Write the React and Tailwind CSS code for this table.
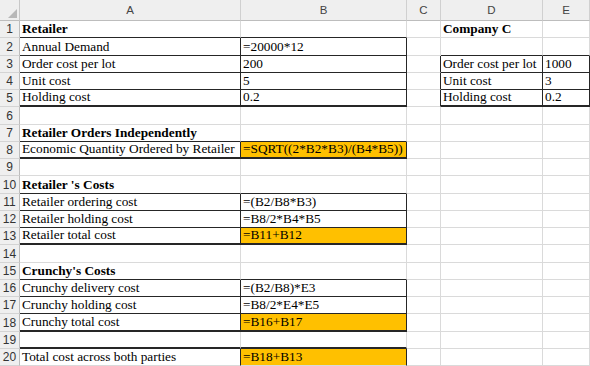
import React from "react";

const BOTTOM = {
  g: "border-b border-b-[#dadada]",
  d: "border-b border-b-[#262626]",
  D: "border-b-2 border-b-[#262626]",
};
const RIGHT = {
  g: "border-r border-r-[#dadada]",
  d: "border-r border-r-[#262626]",
};

// each row: [A, B, C, D, E]; each cell: {t, b (bold), f (fill), bb, br}
const c = (t = "", o = {}) => ({ t, bb: "g", br: "g", ...o });

const rows = [
  [c("Retailer", { b: 1, bb: "d" }), c("", { bb: "d" }), c(), c("Company C", { b: 1 }), c()],
  [c("Annual Demand", { bb: "d", br: "d" }), c("=20000*12", { bb: "d", br: "d" }), c(), c("", { bb: "d" }), c("", { bb: "d" })],
  [c("Order cost per lot", { bb: "d", br: "d" }), c("200", { bb: "d", br: "d" }), c("", { br: "d" }), c("Order cost per lot", { bb: "d", br: "d" }), c("1000", { bb: "d", br: "d" })],
  [c("Unit cost", { bb: "d", br: "d" }), c("5", { bb: "d", br: "d" }), c("", { br: "d" }), c("Unit cost", { bb: "d", br: "d" }), c("3", { bb: "d", br: "d" })],
  [c("Holding cost", { bb: "D", br: "d" }), c("0.2", { bb: "D", br: "d" }), c("", { br: "d" }), c("Holding cost", { bb: "D", br: "d" }), c("0.2", { bb: "D", br: "d" })],
  [c(), c(), c(), c(), c()],
  [c("Retailer Orders Independently", { b: 1, bb: "d" }), c("", { bb: "d" }), c(), c(), c()],
  [c("Economic Quantity Ordered by Retailer", { bb: "D", br: "d" }), c("=SQRT((2*B2*B3)/(B4*B5))", { bb: "D", br: "d", f: 1 }), c(), c(), c()],
  [c(), c(), c(), c(), c()],
  [c("Retailer 's Costs", { b: 1, bb: "d" }), c("", { bb: "d" }), c(), c(), c()],
  [c("Retailer ordering cost", { bb: "d", br: "d" }), c("=(B2/B8*B3)", { bb: "d", br: "d" }), c(), c(), c()],
  [c("Retailer holding cost", { bb: "d", br: "d" }), c("=B8/2*B4*B5", { bb: "d", br: "d" }), c(), c(), c()],
  [c("Retailer total cost", { bb: "D", br: "d" }), c("=B11+B12", { bb: "D", br: "d", f: 1 }), c(), c(), c()],
  [c(), c(), c(), c(), c()],
  [c("Crunchy's Costs", { b: 1, bb: "d" }), c("", { bb: "d" }), c(), c(), c()],
  [c("Crunchy delivery cost", { bb: "d", br: "d" }), c("=(B2/B8)*E3", { bb: "d", br: "d" }), c(), c(), c()],
  [c("Crunchy holding cost", { bb: "d", br: "d" }), c("=B8/2*E4*E5", { bb: "d", br: "d" }), c(), c(), c()],
  [c("Crunchy total cost", { bb: "D", br: "d" }), c("=B16+B17", { bb: "D", br: "d", f: 1 }), c(), c(), c()],
  [c("", { bb: "D" }), c("", { bb: "D" }), c(), c(), c()],
  [c("Total cost across both parties", { br: "d" }), c("=B18+B13", { br: "d", f: 1 }), c(), c(), c()],
];

function Cell({ cell }) {
  return (
    <div
      className={[
        "flex items-end overflow-visible whitespace-nowrap pl-[2px] pb-[1px] text-[13.3px] leading-[15px] text-black",
        cell.f ? "bg-[#ffc000]" : "bg-white",
        cell.b ? "font-bold" : "font-normal",
        BOTTOM[cell.bb],
        RIGHT[cell.br],
      ].join(" ")}
      style={{ fontFamily: '"Liberation Serif", "Times New Roman", serif' }}
    >
      {cell.t}
    </div>
  );
}

export default function App() {
  const headers = ["A", "B", "C", "D", "E"];
  return (
    <div className="w-[590px] h-[366px] overflow-hidden bg-white">
      <div className="grid grid-cols-[20px_221px_166px_34px_102px_47px] grid-rows-[21px_repeat(20,17.25px)]">
        {/* corner */}
        <div className="relative bg-[#efefef] border-r border-b border-r-[#c8c8c8] border-b-[#bdbdbd]">
          <svg className="absolute left-[8px] top-[9px]" width="9" height="9" viewBox="0 0 9 9">
            <polygon points="9,0 9,9 0,9" fill="#b8b8b8" />
          </svg>
        </div>
        {headers.map((h) => (
          <div
            key={h}
            className="flex items-center justify-center bg-[#efefef] border-r border-b border-r-[#d0d0d0] border-b-[#bdbdbd] text-[11.5px] text-[#444] pt-[2px]"
            style={{ fontFamily: '"Liberation Sans", Arial, sans-serif' }}
          >
            {h}
          </div>
        ))}
        {rows.map((r, i) => (
          <React.Fragment key={i}>
            <div
              className="flex items-end justify-center pb-[1px] bg-[#efefef] border-r border-b border-r-[#bdbdbd] border-b-[#d4d4d4] text-[12px] leading-[14px] text-[#333]"
              style={{ fontFamily: '"Liberation Sans", Arial, sans-serif' }}
            >
              {i + 1}
            </div>
            {r.map((cell, j) => (
              <Cell key={j} cell={cell} />
            ))}
          </React.Fragment>
        ))}
      </div>
    </div>
  );
}
